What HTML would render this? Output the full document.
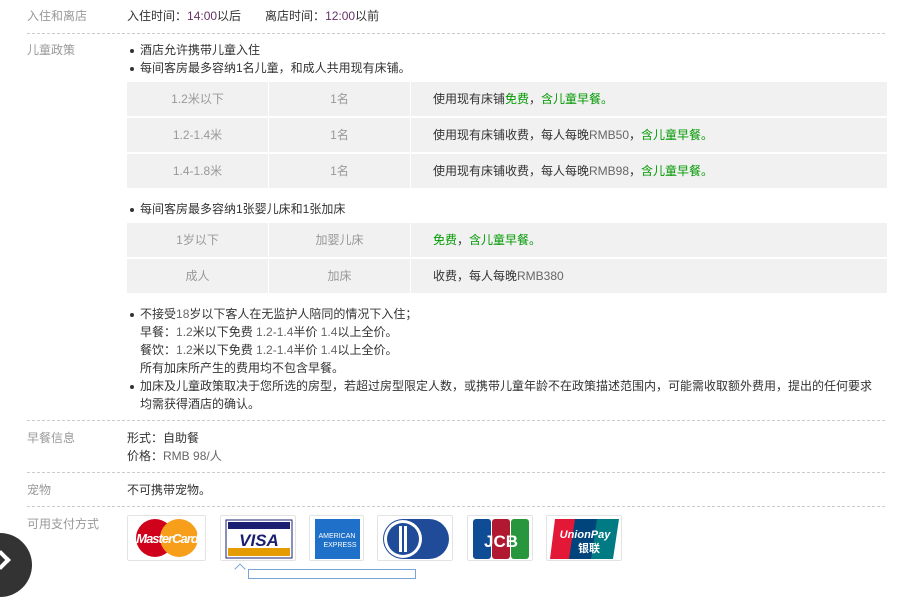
<!DOCTYPE html>
<html><head><meta charset="utf-8"><style>
*{margin:0;padding:0;box-sizing:border-box}
body{width:908px;height:572px;overflow:hidden;background:#fff;font-family:"Liberation Sans","Noto Sans CJK SC","WenQuanYi Zen Hei",sans-serif;font-size:12px;color:#333;position:relative}
.a{position:absolute;white-space:nowrap;line-height:18px}
.lb{color:#999;left:27px}
.hr{position:absolute;left:27px;width:858px;border-top:1px dashed #ccc;height:0}
.c{position:absolute;background:#f1f1f1;line-height:34px;height:34px}
.g{color:#999;text-align:center}
.gr{color:#090}
.n{color:#666}
.b::before{content:"";position:absolute;left:-10px;top:8px;width:4px;height:4px;border-radius:2px;background:#333}
.card{position:absolute;top:515px;height:46px;border:1px solid #e3e3e3;border-radius:2px;background:#fff;overflow:hidden}
</style></head><body>
<div class="a lb" style="top:7px">入住和离店</div>
<div class="a" style="left:127px;top:7px">入住时间：<span style="color:#636">14:00</span>以后　　离店时间：<span style="color:#636">12:00</span>以前</div>
<div class="hr" style="top:33px"></div>
<div class="a lb" style="top:41px">儿童政策</div>
<div class="a b" style="left:140px;top:41px">酒店允许携带儿童入住</div>
<div class="a b" style="left:140px;top:59px">每间客房最多容纳1名儿童，和成人共用现有床铺。</div>

<div class="c g" style="left:127px;top:82px;width:141px">1.2米以下</div>
<div class="c g" style="left:269px;top:82px;width:141px">1名</div>
<div class="c" style="left:411px;top:82px;width:476px;padding-left:22px">使用现有床铺<span class="gr">免费</span>，<span class="gr">含儿童早餐。</span></div>
<div class="c g" style="left:127px;top:118px;width:141px">1.2-1.4米</div>
<div class="c g" style="left:269px;top:118px;width:141px">1名</div>
<div class="c" style="left:411px;top:118px;width:476px;padding-left:22px">使用现有床铺收费，每人每晚<span class="n">RMB50</span>，<span class="gr">含儿童早餐。</span></div>
<div class="c g" style="left:127px;top:154px;width:141px">1.4-1.8米</div>
<div class="c g" style="left:269px;top:154px;width:141px">1名</div>
<div class="c" style="left:411px;top:154px;width:476px;padding-left:22px">使用现有床铺收费，每人每晚<span class="n">RMB98</span>，<span class="gr">含儿童早餐。</span></div>

<div class="a b" style="left:140px;top:200px">每间客房最多容纳1张婴儿床和1张加床</div>
<div class="c g" style="left:127px;top:223px;width:141px">1岁以下</div>
<div class="c g" style="left:269px;top:223px;width:141px">加婴儿床</div>
<div class="c" style="left:411px;top:223px;width:476px;padding-left:22px"><span class="gr">免费</span>，<span class="gr">含儿童早餐。</span></div>
<div class="c g" style="left:127px;top:259px;width:141px">成人</div>
<div class="c g" style="left:269px;top:259px;width:141px">加床</div>
<div class="c" style="left:411px;top:259px;width:476px;padding-left:22px">收费，每人每晚<span class="n">RMB380</span></div>

<div class="a b" style="left:140px;top:305px">不接受<span class="n">18</span>岁以下客人在无监护人陪同的情况下入住；</div>
<div class="a" style="left:140px;top:323px">早餐：<span class="n">1.2</span>米以下免费 <span class="n">1.2-1.4</span>半价 <span class="n">1.4</span>以上全价。</div>
<div class="a" style="left:140px;top:341px">餐饮：<span class="n">1.2</span>米以下免费 <span class="n">1.2-1.4</span>半价 <span class="n">1.4</span>以上全价。</div>
<div class="a" style="left:140px;top:359px">所有加床所产生的费用均不包含早餐。</div>
<div class="a b" style="left:140px;top:377px">加床及儿童政策取决于您所选的房型，若超过房型限定人数，或携带儿童年龄不在政策描述范围内，可能需收取额外费用，提出的任何要求</div>
<div class="a" style="left:140px;top:395px">均需获得酒店的确认。</div>
<div class="hr" style="top:420px"></div>
<div class="a lb" style="top:429px">早餐信息</div>
<div class="a" style="left:127px;top:429px">形式：自助餐</div>
<div class="a" style="left:127px;top:447px">价格：<span class="n">RMB 98/人</span></div>
<div class="hr" style="top:472px"></div>
<div class="a lb" style="top:481px">宠物</div>
<div class="a" style="left:127px;top:481px">不可携带宠物。</div>
<div class="hr" style="top:506px"></div>
<div class="a lb" style="top:515px">可用支付方式</div>

<div class="card" style="left:127px;width:79px"><svg width="79" height="46"><circle cx="27" cy="22" r="19" fill="#d0021b"/><circle cx="51" cy="22" r="19" fill="#f79e1b"/><text x="39" y="27" font-size="13" font-weight="bold" font-style="italic" fill="#fff" text-anchor="middle" font-family="Liberation Sans" letter-spacing="-1">MasterCard</text></svg></div>
<div class="card" style="left:220px;width:76px"><svg width="76" height="46"><rect x="5" y="4" width="66" height="38" fill="none" stroke="#1a1f71"/><rect x="7" y="6" width="62" height="7" fill="#1a1f71"/><rect x="7" y="32" width="62" height="8" fill="#e59c00"/><text x="38" y="30" font-size="17" font-weight="bold" font-style="italic" fill="#1a1f71" text-anchor="middle" font-family="Liberation Sans">VISA</text></svg></div>
<div class="card" style="left:309px;width:55px"><svg width="55" height="46"><rect x="5" y="3" width="45" height="40" fill="#1e70c9"/><text x="27" y="22" font-size="7" fill="#fff" text-anchor="middle" font-family="Liberation Sans">AMERICAN</text><text x="30" y="31" font-size="7" fill="#fff" text-anchor="middle" font-family="Liberation Sans">EXPRESS</text></svg></div>
<div class="card" style="left:377px;width:76px"><svg width="76" height="46"><rect x="5" y="3" width="66" height="40" rx="20" fill="#1f4b99"/><circle cx="25" cy="23" r="19" fill="#fff"/><circle cx="25" cy="23" r="16" fill="#1f4b99"/><rect x="21" y="10" width="8" height="26" fill="#fff"/><rect x="24" y="10" width="2" height="26" fill="#1f4b99"/></svg></div>
<div class="card" style="left:467px;width:66px"><svg width="66" height="46"><rect x="5" y="3" width="18" height="40" rx="3" fill="#0e4c96"/><rect x="24" y="3" width="18" height="40" rx="3" fill="#b0192f"/><rect x="43" y="3" width="18" height="40" rx="3" fill="#27963c"/><text x="33" y="31" font-size="17" font-weight="bold" fill="#fff" text-anchor="middle" font-family="Liberation Sans">JCB</text></svg></div>
<div class="card" style="left:546px;width:76px"><svg width="76" height="46"><polygon points="8,3 30,3 24,43 3,43" fill="#e21836"/><polygon points="28,3 52,3 46,43 22,43" fill="#00447c"/><polygon points="50,3 72,3 66,43 44,43" fill="#007b84"/><text x="38" y="22" font-size="11" font-weight="bold" font-style="italic" fill="#fff" text-anchor="middle" font-family="Liberation Sans">UnionPay</text><text x="42" y="36" font-size="11" font-weight="bold" fill="#fff" text-anchor="middle" font-family="Noto Sans CJK SC,sans-serif">银联</text></svg></div>

<div style="position:absolute;left:-32px;top:533px;width:64px;height:64px;border-radius:50%;background:#333"></div>
<div style="position:absolute;left:-6px;top:553px;width:14px;height:14px;border-right:4px solid #fff;border-top:4px solid #fff;transform:rotate(45deg)"></div>
<div style="position:absolute;left:248px;top:569px;width:168px;height:10px;border:1px solid #7aa3d6"></div>
<div style="position:absolute;left:236px;top:565px;width:8px;height:8px;border-left:1px solid #7aa3d6;border-top:1px solid #7aa3d6;background:#fff;transform:rotate(45deg)"></div>
</body></html>
